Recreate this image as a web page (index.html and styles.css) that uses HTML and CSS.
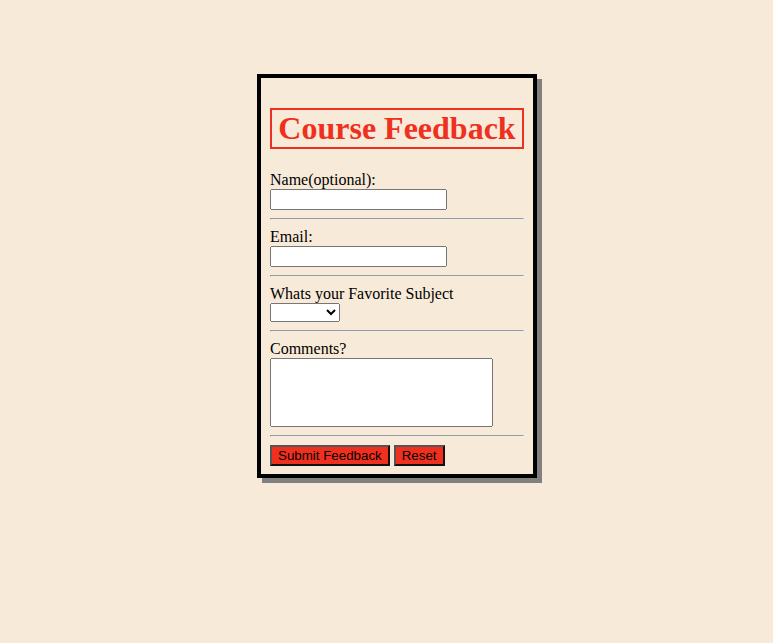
FILE: index.html
```html
<!DOCTYPE html>
<html lang="en">
<head>
  <meta charset="UTF-8" />
  <meta name="viewport" content="width=device-width, initial-scale=1.0" />
  <title>Course Feedback</title>
  <link rel="stylesheet" href="styles.css">
</head>
<body>
  <div class="card">
    <h1 class="title">Course Feedback</h1>
    <form class="feedback">
      <label for="name">Name(optional):</label><br>
      <input type="text" id="name" name="name" class="field">
      <hr>
      <label for="email">Email:</label><br>
      <input type="text" id="email" name="email" class="field">
      <hr>
      <label for="subject">Whats your Favorite Subject</label><br>
      <select id="subject" name="subject" class="subject"></select>
      <hr>
      <label for="comments">Comments?</label><br>
      <textarea id="comments" name="comments" class="comments"></textarea>
      <hr>
      <button type="submit" class="btn">Submit Feedback</button>
      <button type="reset" class="btn">Reset</button>
    </form>
  </div>
</body>
</html>
```

FILE: styles.css
```css
html {
  background-color: #f8ead8;
}

body {
  margin: 0;
  padding: 74px 0 40px 257px;
  font-family: "Liberation Serif", "Times New Roman", serif;
  font-size: 16px;
  color: #000;
}

.card {
  box-sizing: border-box;
  width: 280px;
  border: 4px solid #000;
  padding: 9px 9px 8px;
  box-shadow: 5px 5px 0 #808080;
}

.title {
  margin: 21.44px 0;
  font-size: 32px;
  text-align: center;
  color: #f0301e;
  border: 2px solid #f0301e;
}

.feedback hr {
  margin: 8px 0;
}

.field {
  box-sizing: border-box;
  width: 177px;
}

.subject {
  width: 70px;
}

.comments {
  box-sizing: border-box;
  width: 223px;
  height: 69px;
  resize: none;
  vertical-align: bottom;
}

.btn {
  font-family: "Liberation Sans", Arial, sans-serif;
  font-size: 13.333px;
  color: #000;
  background-color: #f0301e;
  padding: 1px 6px;
  border: 2px solid;
  border-color: #555 #111 #111 #555;
}
```
